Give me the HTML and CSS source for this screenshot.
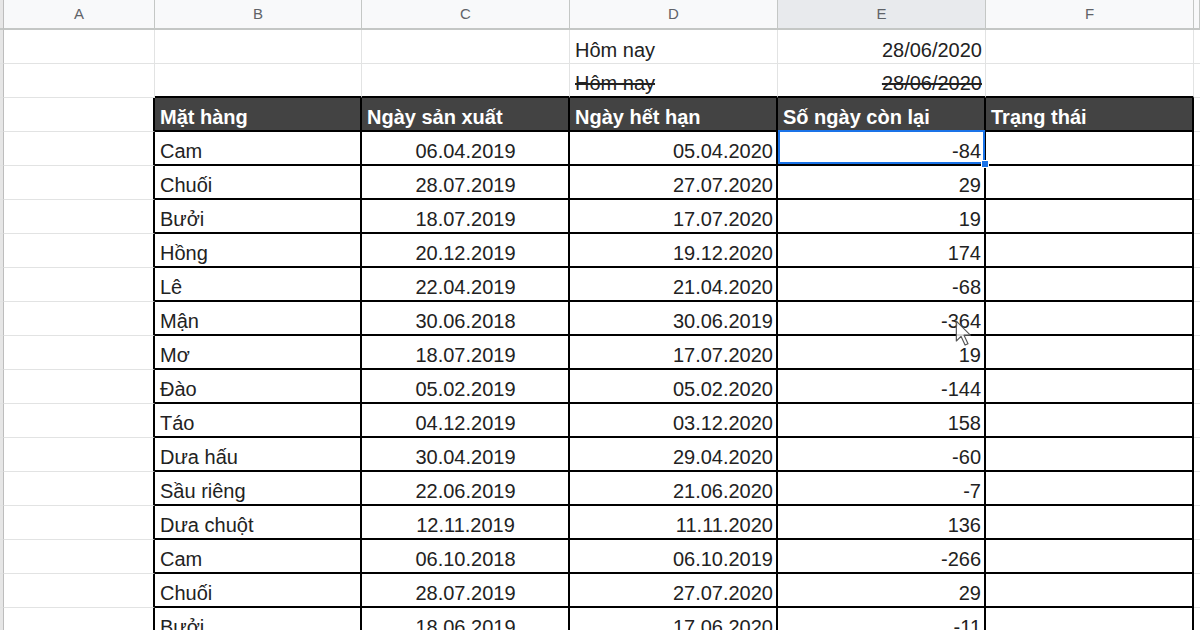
FILE: index.html
```html
<!DOCTYPE html>
<html lang="vi">
<head>
    <meta charset="UTF-8">
    <title>Hạn sử dụng</title>
    <link rel="stylesheet" href="styles.css">
</head>
<body>
<div class="sheet">
    <div class="row colhead">
        <div class="cell gut"></div>
        <div class="cell">A</div>
        <div class="cell">B</div>
        <div class="cell">C</div>
        <div class="cell">D</div>
        <div class="cell active">E</div>
        <div class="cell">F</div>
        <div class="cell"></div>
    </div>
    <div class="row">
        <div class="cell gut"></div>
        <div class="cell"></div>
        <div class="cell"></div>
        <div class="cell"></div>
        <div class="cell">Hôm nay</div>
        <div class="cell r">28/06/2020</div>
        <div class="cell"></div>
        <div class="cell"></div>
    </div>
    <div class="row above">
        <div class="cell gut"></div>
        <div class="cell"></div>
        <div class="cell"></div>
        <div class="cell"></div>
        <div class="cell strike">Hôm nay</div>
        <div class="cell r strike">28/06/2020</div>
        <div class="cell"></div>
        <div class="cell"></div>
    </div>
    <div class="row t th">
        <div class="cell gut"></div>
        <div class="cell"></div>
        <div class="cell">Mặt hàng</div>
        <div class="cell">Ngày sản xuất</div>
        <div class="cell">Ngày hết hạn</div>
        <div class="cell">Số ngày còn lại</div>
        <div class="cell">Trạng thái</div>
        <div class="cell"></div>
    </div>
    <div class="row t">
        <div class="cell gut"></div><div class="cell"></div>
        <div class="cell">Cam</div><div class="cell c">06.04.2019</div><div class="cell r">05.04.2020</div>
        <div class="cell r sel">-84<span class="selbox"></span><span class="handle"></span></div>
        <div class="cell"></div><div class="cell"></div>
    </div>
    <div class="row t">
        <div class="cell gut"></div><div class="cell"></div>
        <div class="cell">Chuối</div><div class="cell c">28.07.2019</div><div class="cell r">27.07.2020</div>
        <div class="cell r">29</div><div class="cell"></div><div class="cell"></div>
    </div>
    <div class="row t">
        <div class="cell gut"></div><div class="cell"></div>
        <div class="cell">Bưởi</div><div class="cell c">18.07.2019</div><div class="cell r">17.07.2020</div>
        <div class="cell r">19</div><div class="cell"></div><div class="cell"></div>
    </div>
    <div class="row t">
        <div class="cell gut"></div><div class="cell"></div>
        <div class="cell">Hồng</div><div class="cell c">20.12.2019</div><div class="cell r">19.12.2020</div>
        <div class="cell r">174</div><div class="cell"></div><div class="cell"></div>
    </div>
    <div class="row t">
        <div class="cell gut"></div><div class="cell"></div>
        <div class="cell">Lê</div><div class="cell c">22.04.2019</div><div class="cell r">21.04.2020</div>
        <div class="cell r">-68</div><div class="cell"></div><div class="cell"></div>
    </div>
    <div class="row t">
        <div class="cell gut"></div><div class="cell"></div>
        <div class="cell">Mận</div><div class="cell c">30.06.2018</div><div class="cell r">30.06.2019</div>
        <div class="cell r">-364</div><div class="cell"></div><div class="cell"></div>
    </div>
    <div class="row t">
        <div class="cell gut"></div><div class="cell"></div>
        <div class="cell">Mơ</div><div class="cell c">18.07.2019</div><div class="cell r">17.07.2020</div>
        <div class="cell r">19</div><div class="cell"></div><div class="cell"></div>
    </div>
    <div class="row t">
        <div class="cell gut"></div><div class="cell"></div>
        <div class="cell">Đào</div><div class="cell c">05.02.2019</div><div class="cell r">05.02.2020</div>
        <div class="cell r">-144</div><div class="cell"></div><div class="cell"></div>
    </div>
    <div class="row t">
        <div class="cell gut"></div><div class="cell"></div>
        <div class="cell">Táo</div><div class="cell c">04.12.2019</div><div class="cell r">03.12.2020</div>
        <div class="cell r">158</div><div class="cell"></div><div class="cell"></div>
    </div>
    <div class="row t">
        <div class="cell gut"></div><div class="cell"></div>
        <div class="cell">Dưa hấu</div><div class="cell c">30.04.2019</div><div class="cell r">29.04.2020</div>
        <div class="cell r">-60</div><div class="cell"></div><div class="cell"></div>
    </div>
    <div class="row t">
        <div class="cell gut"></div><div class="cell"></div>
        <div class="cell">Sầu riêng</div><div class="cell c">22.06.2019</div><div class="cell r">21.06.2020</div>
        <div class="cell r">-7</div><div class="cell"></div><div class="cell"></div>
    </div>
    <div class="row t">
        <div class="cell gut"></div><div class="cell"></div>
        <div class="cell">Dưa chuột</div><div class="cell c">12.11.2019</div><div class="cell r">11.11.2020</div>
        <div class="cell r">136</div><div class="cell"></div><div class="cell"></div>
    </div>
    <div class="row t">
        <div class="cell gut"></div><div class="cell"></div>
        <div class="cell">Cam</div><div class="cell c">06.10.2018</div><div class="cell r">06.10.2019</div>
        <div class="cell r">-266</div><div class="cell"></div><div class="cell"></div>
    </div>
    <div class="row t">
        <div class="cell gut"></div><div class="cell"></div>
        <div class="cell">Chuối</div><div class="cell c">28.07.2019</div><div class="cell r">27.07.2020</div>
        <div class="cell r">29</div><div class="cell"></div><div class="cell"></div>
    </div>
    <div class="row t">
        <div class="cell gut"></div><div class="cell"></div>
        <div class="cell">Bưởi</div><div class="cell c">18.06.2019</div><div class="cell r">17.06.2020</div>
        <div class="cell r">-11</div><div class="cell"></div><div class="cell"></div>
    </div>
</div>
<!-- con trỏ chuột -->
<svg class="cursor" width="19" height="28" viewBox="0 0 16 24">
    <path d="M1 1 L1 18 L5 14 L8.5 21.5 L11 20.3 L7.6 13 L13 13 Z" fill="#fff" fill-opacity="0.85" stroke="#555" stroke-width="1" stroke-linejoin="round"/>
</svg>
</body>
</html>
```

FILE: styles.css
```css
*{
    margin: 0;
    padding: 0;
    box-sizing: border-box;
}
body{
    width: 1200px;
    height: 630px;
    overflow: hidden;
    background: #fff;
    font-family: "Liberation Sans", Arial, sans-serif;
    color: #222;
    position: relative;
}
.sheet .row{
    display: grid;
    grid-template-columns: 4px 151px 207px 208px 208px 208px 208px 1fr;
    height: 34px;
}
.sheet .cell{
    border-right: 1px solid #e2e3e3;
    border-bottom: 1px solid #e2e3e3;
    padding: 0 4px 2px 5px;
    font-size: 20px;
    line-height: 22px;
    white-space: nowrap;
    overflow: hidden;
    display: flex;
    align-items: flex-end;
}
.sheet .cell.r{
    justify-content: flex-end;
    padding-right: 3px;
}
.sheet .cell.c{
    justify-content: center;
}
.sheet .cell.gut{
    background: #e6e6e6;
    border-right: 1px solid #bdbdbd;
    padding: 0;
}
.sheet .cell.strike{
    text-decoration: line-through;
}

/* hàng tiêu đề cột A, B, C... */
.sheet .colhead{
    height: 30px;
}
.sheet .colhead .cell{
    background: #f8f9fa;
    border-right: 1px solid #c4c7c5;
    border-bottom: 2px solid #c4c7c5;
    font-size: 15px;
    color: #5f6368;
    justify-content: center;
    align-items: center;
    padding: 0;
}
.sheet .colhead .cell.active{
    background: #e8eaed;
}
.sheet .colhead .cell.gut{
    background: #e6e6e6;
    border-right: 1px solid #bdbdbd;
}

/* viền bảng */
.sheet .above .cell:nth-child(n+3):nth-child(-n+7){
    border-bottom: 2px solid #000;
}
.sheet .t .cell:nth-child(2){
    border-right: 2px solid #000;
}
.sheet .t .cell:nth-child(n+3):nth-child(-n+7){
    border-right: 2px solid #000;
    border-bottom: 2px solid #000;
}
.sheet .th .cell:nth-child(n+3):nth-child(-n+7){
    background: #434343;
    color: #fff;
    font-weight: bold;
    padding-left: 5px;
}

/* ô đang chọn */
.sheet .cell.sel{
    position: relative;
    overflow: visible;
}
.sheet .cell.sel .selbox{
    position: absolute;
    left: 0;
    top: -2px;
    right: -1px;
    bottom: 0;
    border: 2px solid #1a73e8;
}
.sheet .cell.sel .handle{
    position: absolute;
    right: -5px;
    bottom: -4px;
    width: 8px;
    height: 8px;
    background: #1a73e8;
    border: 1px solid #fff;
}
.cursor{
    position: absolute;
    left: 955px;
    top: 320px;
}
```
